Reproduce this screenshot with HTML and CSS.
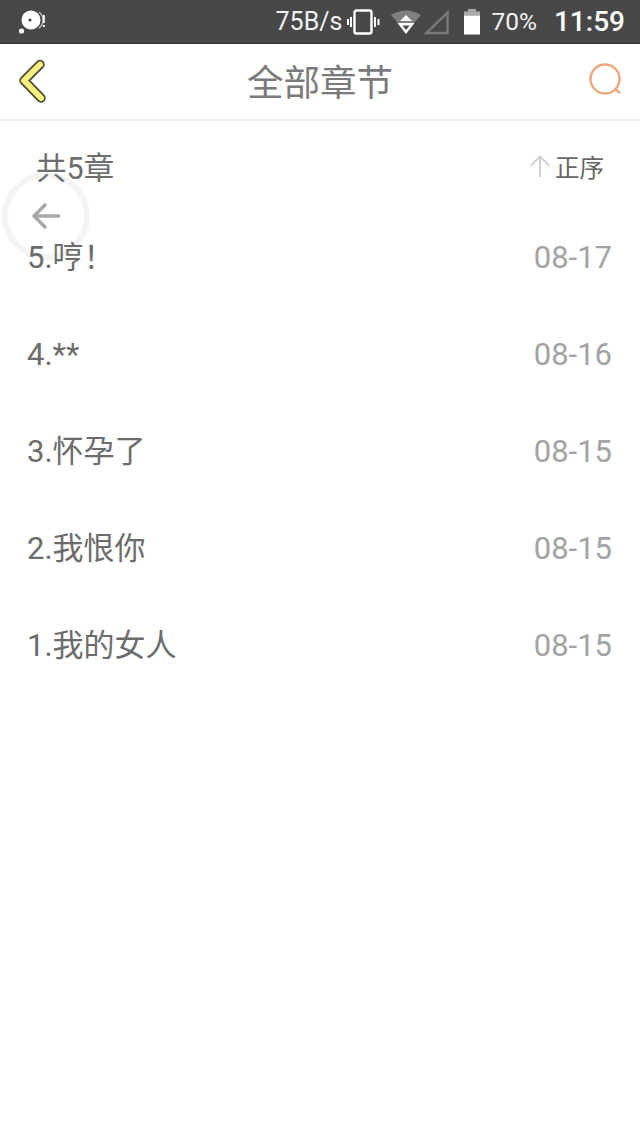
FILE: index.html
```html
<!DOCTYPE html>
<html lang="zh-CN">
<head>
  <meta charset="UTF-8">
  <meta name="viewport" content="width=device-width, initial-scale=1.0">
  <title>全部章节</title>
  <link rel="stylesheet" href="styles.css">
</head>
<body>
  <div class="status-bar">
    <div class="status-left">
      <svg class="icon-disc" width="28" height="26" viewBox="0 0 28 26">
        <circle cx="13" cy="11" r="9.5" fill="#fff"/>
        <circle cx="12" cy="11" r="1.6" fill="#484848"/>
        <path d="M21 3a10 10 0 0 1 0 16" fill="none" stroke="#bbb" stroke-width="1.5"/>
        <circle cx="3.5" cy="22" r="2.6" fill="#fff"/>
        <rect x="25" y="6" width="1.8" height="8" fill="#fff"/>
        <rect x="25" y="16" width="1.8" height="2" fill="#fff"/>
      </svg>
    </div>
    <div class="status-right">
      <span class="net-speed">75B/s</span>
      <svg class="icon-vibrate" width="33" height="26" viewBox="0 0 33 26">
        <rect x="7.500" y="1.500" width="17" height="23" rx="2" fill="none" stroke="#fff" stroke-width="2.400"/>
        <path d="M4 8v10M1 10v6M28 8v10M31.500 10v6" stroke="#fff" stroke-width="2" fill="none"/>
      </svg>
      <svg class="icon-wifi" width="32" height="26" viewBox="0 0 32 26">
        <path d="M1 6Q16 -3 31 6L24 14H8Z" fill="#808080"/>
        <path d="M16 6L22 12H10Z" fill="#fff"/>
        <path d="M7.500 14H24.500L16 25Z" fill="#fff"/>
        <path d="M12.500 16.500H19.500L16 21Z" fill="#484848"/>
      </svg>
      <svg class="icon-signal" width="25" height="26" viewBox="0 0 25 26">
        <path d="M23.500 3.500V24H2.500Z" fill="none" stroke="#7a7a7a" stroke-width="2.400"/>
      </svg>
      <svg class="icon-battery" width="18" height="26" viewBox="0 0 18 26">
        <rect x="5" y="0" width="8" height="3" fill="#a8a8a8"/>
        <rect x="1" y="2.500" width="16" height="4" fill="#a8a8a8"/>
        <rect x="1" y="6.500" width="16" height="19" fill="#fff"/>
      </svg>
      <span class="battery-pct">70%</span>
      <span class="clock">11:59</span>
    </div>
  </div>

  <header class="top-nav">
    <svg class="nav-back" width="36" height="46" viewBox="0 0 36 46">
      <path d="M24 6.500L8 22.500L25 40" fill="none" stroke="#4a4a3c" stroke-width="9.500" stroke-linecap="round" stroke-linejoin="round"/>
      <path d="M24 6.500L8 22.500L25 40" fill="none" stroke="#f6f27a" stroke-width="6" stroke-linecap="round" stroke-linejoin="round"/>
    </svg>
    <h1 class="nav-title">全部章节</h1>
    <svg class="nav-search" width="36" height="36" viewBox="0 0 36 36">
      <circle cx="17" cy="16" r="14.500" fill="none" stroke="#eba67c" stroke-width="2.400"/>
      <path d="M27.500 26.500L32 30" fill="none" stroke="#eba67c" stroke-width="2.400"/>
    </svg>
  </header>

  <main class="chapters">
    <div class="chapters-head">
      <span class="chapters-count">共5章</span>
      <span class="sort">
        <svg class="sort-arrow" width="20" height="22" viewBox="0 0 20 22">
          <path d="M10 22V1.500M1 10.500L10 1.500L19 10.500" fill="none" stroke="#cfcfcf" stroke-width="1.800"/>
        </svg>
        正序
      </span>
    </div>
    <ul class="chapter-list">
      <li class="chapter"><span>5.哼！</span><span class="chapter-date">08-17</span></li>
      <li class="chapter"><span>4.**</span><span class="chapter-date">08-16</span></li>
      <li class="chapter"><span>3.怀孕了</span><span class="chapter-date">08-15</span></li>
      <li class="chapter"><span>2.我恨你</span><span class="chapter-date">08-15</span></li>
      <li class="chapter"><span>1.我的女人</span><span class="chapter-date">08-15</span></li>
    </ul>
  </main>

  <div class="float-back">
    <svg width="30" height="28" viewBox="0 0 30 28">
      <path d="M29 14H3M15 2L3 14L15 26" fill="none" stroke="#a8a8a8" stroke-width="3.400"/>
    </svg>
  </div>
</body>
</html>
```

FILE: styles.css
```css
* {
  margin: 0;
  padding: 0;
  box-sizing: border-box;
}

body {
  position: relative;
  min-height: 100vh;
  background-color: #fff;
  font-family: Roboto, "Noto Sans CJK SC", sans-serif;
  overflow: hidden;
}

.status-bar {
  display: flex;
  justify-content: space-between;
  align-items: center;
  height: 44px;
  padding: 0 15px 0 18px;
  background-color: #484848;
  border-bottom: 1px solid #333;
  color: #f2f2f2;
}

.status-left,
.status-right {
  display: flex;
  align-items: center;
}

.net-speed {
  font-size: 25px;
  margin-right: 5px;
}

.icon-wifi {
  margin-left: 10px;
}

.icon-signal {
  margin-left: 2px;
}

.icon-battery {
  margin-left: 14px;
}

.battery-pct {
  font-size: 24.5px;
  margin-left: 10px;
}

.clock {
  font-size: 28px;
  font-weight: 500;
  margin-left: 17px;
  color: #fff;
}

.top-nav {
  display: flex;
  justify-content: space-between;
  align-items: center;
  height: 77px;
  padding: 0 16px 2px 16px;
  border-bottom: 2px solid #eeeeee;
}

.nav-title {
  font-size: 36.5px;
  font-weight: 400;
  color: #7a7a7a;
}

/* list text sits on top of the floating button */
.chapters {
  position: relative;
  z-index: 1;
}

.chapters-head {
  display: flex;
  justify-content: space-between;
  align-items: center;
  height: 96px;
  padding: 0 36px 6px 36px;
}

.chapters-count {
  font-size: 30.5px;
  color: #6e6e6e;
}

.sort {
  display: flex;
  align-items: center;
  gap: 5px;
  font-size: 24.500px;
  color: #666;
}

.chapter-list {
  list-style: none;
  margin-top: -11px;
}

.chapter {
  display: flex;
  justify-content: space-between;
  align-items: baseline;
  height: 97px;
  padding: 33px 28px 0 27px;
  font-size: 31px;
  line-height: 1.2;
  color: #6c6c6c;
}

.chapter-date {
  font-size: 31px;
  color: #a3a3a3;
}

.float-back {
  position: absolute;
  left: 2px;
  top: 172px;
  display: flex;
  justify-content: center;
  align-items: center;
  width: 88px;
  height: 88px;
  border: 6px solid #f4f4f4;
  border-radius: 50%;
}
```
